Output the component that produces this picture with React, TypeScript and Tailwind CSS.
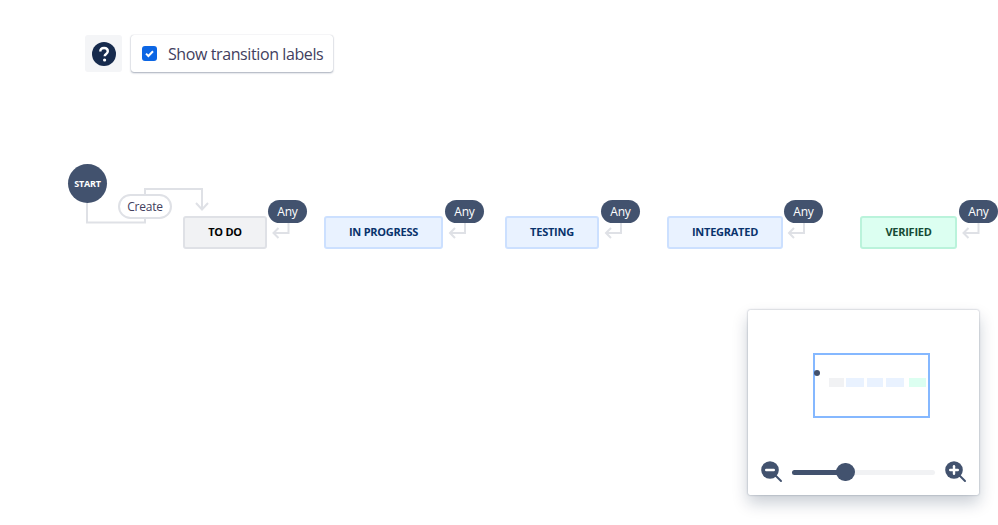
import React from 'react';

const font = "font-['Open_Sans','Noto_Sans',sans-serif]";

// Status nodes of the workflow diagram
const statuses = [
  { label: 'TO DO', box: 'left-[183px] w-[84px] bg-[#f1f2f4] border-[#dfe1e6] text-[#000000]' },
  { label: 'IN PROGRESS', box: 'left-[324px] w-[119px] bg-[#e9f2ff] border-[#cce0ff] text-[#09326c]' },
  { label: 'TESTING', box: 'left-[505px] w-[94px] bg-[#e9f2ff] border-[#cce0ff] text-[#09326c]' },
  { label: 'INTEGRATED', box: 'left-[667px] w-[116px] bg-[#e9f2ff] border-[#cce0ff] text-[#09326c]' },
  { label: 'VERIFIED', box: 'left-[860px] w-[97px] bg-[#dcfff1] border-[#baf3db] text-[#164b35]' },
];

const anyPills = ['left-[268px]', 'left-[445px]', 'left-[601px]', 'left-[784px]', 'left-[959px]'];
const anyCenters = [288.5, 465, 621, 804, 978.5];

const miniBars = [
  'w-[15px] ml-[14px] bg-[#f1f2f4]',
  'w-[18px] ml-[2px] bg-[#e9f2ff]',
  'w-[16px] ml-[3px] bg-[#e9f2ff]',
  'w-[18px] ml-[3px] bg-[#e9f2ff]',
  'w-[17px] ml-[5px] bg-[#dcfff1]',
];

function ZoomIcon({ plus }: { plus?: boolean }) {
  return (
    <svg width="24" height="24" viewBox="0 0 24 24" className="shrink-0">
      <circle cx="10" cy="10" r="8.800" fill="#42526e" />
      <path d="M16 16l5 5" stroke="#42526e" strokeWidth="2" strokeLinecap="round" />
      <path d="M6.200 10h7.600" stroke="#fff" strokeWidth="2.400" strokeLinecap="round" />
      {plus && <path d="M10 6.200v7.600" stroke="#fff" strokeWidth="2.400" strokeLinecap="round" />}
    </svg>
  );
}

export default function App() {
  return (
    <div className={`relative w-[998px] h-[525px] overflow-hidden bg-white ${font}`}>
      {/* Toolbar */}
      <div className="flex items-stretch gap-[9px] pl-[85px] pt-[35px]">
        <div className="flex h-[37px] w-[37px] items-center justify-center rounded-[3px] bg-[#f4f5f7]">
          <svg width="24" height="24" viewBox="0 0 24 24">
            <circle cx="12" cy="12" r="12" fill="#172b4d" />
            <path
              d="M8.300 9.600c0-2.200 1.700-3.600 3.800-3.600s3.700 1.300 3.700 3.300c0 1.500-.9 2.300-1.900 3-.8.600-1.200 1-1.200 1.900"
              fill="none"
              stroke="#fff"
              strokeWidth="2.400"
            />
            <circle cx="12.600" cy="18" r="1.600" fill="#fff" />
          </svg>
        </div>
        <label className="flex h-[37px] w-[202px] items-center rounded-[3px] bg-white pl-[11px] shadow-[0_1px_2px_rgba(9,30,66,0.35),0_0_1px_rgba(9,30,66,0.25)]">
          <span className="flex h-[15px] w-[15px] items-center justify-center rounded-[3px] bg-[#0c66e4]">
            <svg width="11" height="11" viewBox="0 0 11 11">
              <path d="M2 5.600l2.400 2.400L9 3.200" fill="none" stroke="#fff" strokeWidth="2" />
            </svg>
          </span>
          <span className="ml-[11px] mt-[1px] text-[16px] leading-none tracking-[-0.4px] text-[#42405e]">Show transition labels</span>
        </label>
      </div>

      {/* Connector lines of the diagram */}
      <svg width="998" height="525" className="absolute left-0 top-0" fill="none" stroke="#dfe1e6" strokeWidth="2">
        <path d="M87 200V222.500H145V189H202V209" />
        <path d="M196 203l6 6.500 6-6.500" />
        {anyCenters.map((x) => (
          <g key={x}>
            <path d={`M${x} 221V233H${x - 15}`} />
            <path d={`M${x - 10} 228l-5 5 5 5`} />
          </g>
        ))}
      </svg>

      {/* Start node */}
      <div className="absolute left-[68px] top-[164px] flex h-[39px] w-[39px] items-center justify-center rounded-full bg-[#42526e] text-[9px] font-bold tracking-[-0.2px] text-white">
        START
      </div>

      <div className="absolute left-[118px] top-[194px] flex h-[25px] w-[54px] items-center justify-center rounded-full border-2 border-[#dfe1e6] bg-white text-[12px] tracking-[-0.2px] text-[#42405e]">
        Create
      </div>

      {statuses.map((s) => (
        <div
          key={s.label}
          className={`absolute top-[216px] flex h-[33px] items-center justify-center rounded-[3px] border-2 text-[11px] font-bold tracking-[-0.25px] ${s.box}`}
        >
          {s.label}
        </div>
      ))}

      {anyPills.map((pos) => (
        <div
          key={pos}
          className={`absolute top-[200px] flex h-[23px] w-[39px] items-center justify-center rounded-full bg-[#42526e] text-[12px] tracking-[-0.2px] text-white ${pos}`}
        >
          Any
        </div>
      ))}

      {/* Minimap panel */}
      <div className="absolute left-[748px] top-[310px] flex h-[185px] w-[231px] flex-col rounded-[2px] bg-white shadow-[0_8px_16px_rgba(9,30,66,0.22),0_0_2px_rgba(9,30,66,0.4)]">
        <div className="relative ml-[65px] mt-[43px] flex h-[65px] w-[117px] items-end border-2 border-[#85b8ff]">
          <span className="absolute left-[-1.500px] top-[15px] h-[6px] w-[6px] rounded-full bg-[#42526e]" />
          <div className="mb-[29px] flex h-[9px]">
            {miniBars.map((b) => (
              <span key={b} className={`block h-full ${b}`} />
            ))}
          </div>
        </div>
        <div className="mt-[42px] flex items-center pl-[12px]">
          <ZoomIcon />
          <div className="relative ml-[8px] h-[5px] w-[143px] rounded-full bg-[#f1f2f4]">
            <div className="h-full w-[53px] rounded-full bg-[#42526e]" />
            <span className="absolute left-[44px] top-[-7px] h-[18.500px] w-[18.500px] rounded-full bg-[#42526e]" />
          </div>
          <div className="ml-[9px]">
            <ZoomIcon plus />
          </div>
        </div>
      </div>
    </div>
  );
}
